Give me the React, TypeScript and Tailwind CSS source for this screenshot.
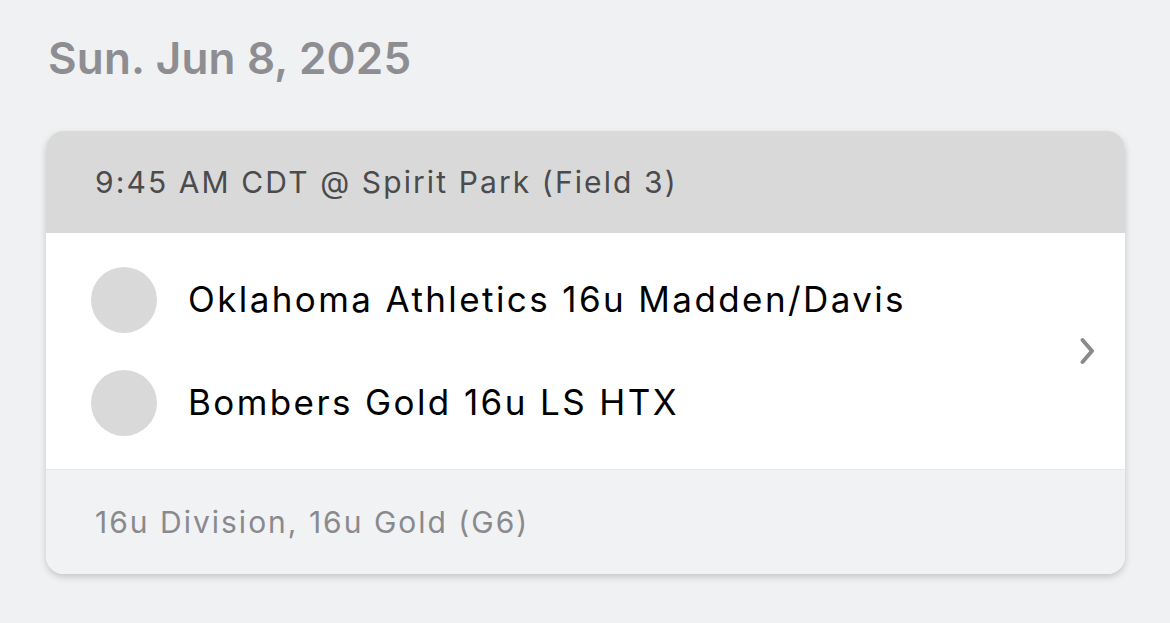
import React from 'react';

const teams = ['Oklahoma Athletics 16u Madden/Davis', 'Bombers Gold 16u LS HTX'];

export default function App() {
  return (
    <div className="min-h-[623px] w-[1170px] bg-[#f0f1f3] px-[46px] pt-[30px] font-['Inter',sans-serif]">
      <h1 className="pl-[2px] text-[44px] leading-[56px] font-semibold tracking-[0.2px] text-[#8e8e92]">Sun. Jun 8, 2025</h1>

      <div className="mt-[45px] w-[1079px] overflow-hidden rounded-[18px] bg-white shadow-[0_3px_7px_rgba(0,0,0,0.18)]">
        {/* header */}
        <div className="flex h-[102px] items-center bg-[#d9d9d9] px-[49px]">
          <span className="text-[30px] tracking-[2.1px] text-[#4b4b4d]">9:45 AM CDT @ Spirit Park (Field 3)</span>
        </div>

        {/* teams */}
        <div className="flex h-[236px] items-center bg-white pr-[28px] pl-[45px]">
          <div className="flex flex-1 flex-col gap-[37px]">
            {teams.map((t) => (
              <div key={t} className="flex items-center gap-[31px]">
                <div className="h-[66px] w-[66px] shrink-0 rounded-full bg-[#d9d9d9]" />
                <span className="text-[35px] tracking-[2.4px] text-black">{t}</span>
              </div>
            ))}
          </div>
          <svg width="20" height="30" viewBox="0 0 20 30" fill="none" className="text-[#8a8a8e]">
            <path d="M5.5 4 L15 15 L5.5 26" stroke="currentColor" strokeWidth="4" strokeLinecap="round" strokeLinejoin="round" />
          </svg>
        </div>

        {/* footer */}
        <div className="flex h-[105px] items-center border-t border-[#e6e7e9] bg-[#f1f2f4] px-[49px]">
          <span className="text-[30px] tracking-[2px] text-[#8a8a8e]">16u Division, 16u Gold (G6)</span>
        </div>
      </div>
    </div>
  );
}
